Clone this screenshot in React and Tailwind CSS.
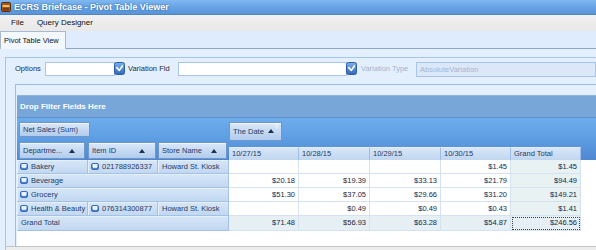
import React from "react";

function AppIcon() {
  return (
    <svg width="10" height="10" viewBox="0 0 10 10">
      <rect x="0.5" y="0.5" width="9" height="9" rx="1" fill="#a4561f" stroke="#5b2c0c" />
      <rect x="1.5" y="3" width="7" height="2" fill="#f0c060" />
      <rect x="2" y="6" width="6" height="2.5" fill="#7a3a12" />
    </svg>
  );
}

function DropBtn() {
  return (
    <svg width="11" height="13" viewBox="0 0 11 13" className="shrink-0 -ml-px">
      <defs>
        <linearGradient id="db" x1="0" y1="0" x2="0" y2="1">
          <stop offset="0" stopColor="#7fb0ec" />
          <stop offset="1" stopColor="#2f66b8" />
        </linearGradient>
      </defs>
      <rect x="0.5" y="0.5" width="10" height="12" rx="2" fill="url(#db)" stroke="#2b5ca6" />
      <path d="M2.8 5.6 L5.3 8.4 L8.4 4" fill="none" stroke="#ffffff" strokeWidth="1.6" strokeLinecap="round" strokeLinejoin="round" />
    </svg>
  );
}

function Tri() {
  return (
    <svg width="6" height="4" viewBox="0 0 6 4" className="shrink-0">
      <path d="M0 4 L3 0 L6 4Z" fill="#1d2f4f" />
    </svg>
  );
}

function Funnel() {
  return (
    <svg width="5" height="5" viewBox="0 0 5 5" className="shrink-0">
      <path d="M0.5 0.5 H4.5 L3 2.3 V4.5 L2 4 V2.3Z" fill="none" stroke="#eef4fc" strokeWidth="0.8" />
    </svg>
  );
}

function Collapse() {
  return (
    <svg width="8" height="7" viewBox="0 0 8 7" className="shrink-0">
      <rect x="0.5" y="0.5" width="7" height="6" rx="1.5" fill="#4d84cc" stroke="#3a6db5" />
      <rect x="1.5" y="1" width="5" height="3" rx="0.5" fill="#e9f2fc" />
      <path d="M2 4.5 H6" stroke="#ffffff" strokeWidth="0.8" />
    </svg>
  );
}

const fieldBtn =
  "box-border flex items-center border border-[#7097cb] bg-[linear-gradient(180deg,#dbe8f8,#c3d8f2_55%,#b2ccec)] text-[#1f3a66] shadow-[inset_0_1px_0_#eef5fd]";

const cols = [70, 71, 71, 70, 70];
const dates = ["10/27/15", "10/28/15", "10/29/15", "10/30/15", "Grand Total"];

const rows = [
  { h: ["Bakery", "021788926337", "Howard St. Kiosk"], v: ["", "", "", "$1.45", "$1.45"] },
  { h: ["Beverage"], v: ["$20.18", "$19.39", "$33.13", "$21.79", "$94.49"] },
  { h: ["Grocery"], v: ["$51.30", "$37.05", "$29.66", "$31.20", "$149.21"] },
  { h: ["Health & Beauty", "076314300877", "Howard St. Kiosk"], v: ["", "$0.49", "$0.49", "$0.43", "$1.41"] },
];

const rowHead =
  "box-border h-full flex items-center border-r border-b border-[#a4c1e6] bg-[linear-gradient(180deg,#d6e6f8,#c2d8f1)] text-[#1f3a66] shadow-[inset_1px_1px_0_#e6f0fb] whitespace-nowrap overflow-hidden";

function DataCells({ v, total }) {
  return v.map((x, i) => {
    const gt = i === 4;
    let bg = "bg-white";
    if (gt) bg = "bg-[#e8f2f2]";
    if (total) bg = "bg-[#e5eff4]";
    const focus = total && gt;
    return (
      <div
        key={i}
        style={{ width: cols[i] }}
        className={`box-border h-full border-r border-b border-[#d4e2f2] ${bg} flex items-center justify-end pr-[3px] text-[#1c1f3d] ${
          focus ? "outline outline-1 outline-dotted outline-[#444] -outline-offset-2" : ""
        }`}
      >
        {x}
      </div>
    );
  });
}

export default function App() {
  return (
    <div className="w-[596px] h-[250px] overflow-hidden flex flex-col bg-[#e3effd] text-[7.5px] leading-none font-['Liberation_Sans',Arial,sans-serif] text-[#1a1a1a]">
      {/* Title bar */}
      <div className="h-[15px] shrink-0 flex items-center gap-[3px] pl-[1px] bg-[linear-gradient(180deg,#80b8f0,#64a0e3_60%,#5a93d8)] border-b border-[#4f86c9]">
        <AppIcon />
        <span className="text-white font-bold text-[9px] [text-shadow:0_0_2px_#1f4f8f]">
          ECRS Briefcase - Pivot Table Viewer
        </span>
      </div>
      {/* Menu bar */}
      <div className="h-[16px] shrink-0 flex items-center gap-[13px] pl-[11px] bg-[linear-gradient(180deg,#f1f1f1,#e8e8e8)] text-[#111] text-[8px]">
        <span>File</span>
        <span>Query Designer</span>
      </div>
      {/* Tab strip */}
      <div className="h-[18px] shrink-0 box-border flex bg-[#dfecfd] border-b border-[#8ea6c6]">
        <div className="relative z-10 w-[66px] h-[18px] -mb-px box-border bg-[#f3f8fe] border-x border-t border-[#a8b8cd] flex items-center pl-[3px] text-[#111]">
          Pivot Table View
        </div>
      </div>
      {/* Panel */}
      <div className="flex-1 flex flex-col pt-[8px] pl-[5px] min-h-0">
        <div className="flex-1 flex flex-col border-t border-l border-[#a6c6ee] min-h-0">
          {/* Options row */}
          <div className="h-[26px] shrink-0 flex items-start pt-[4px] pl-[9px]">
            <div className="h-[14px] flex items-center w-[30px] text-[#1d2a40]">Options</div>
            <div className="h-[14px] w-[70px] box-border bg-white border border-[#a9c4e6]" />
            <DropBtn />
            <div className="h-[14px] flex items-center ml-[3px] w-[50px] text-[#1d2a40]">Variation Fld</div>
            <div className="h-[14px] w-[169px] box-border bg-white border border-[#a9c4e6]" />
            <DropBtn />
            <div className="h-[14px] flex items-center ml-[4px] w-[55px] text-[#9fb5d2]">Variation Type</div>
            <div className="h-[15px] flex-1 box-border bg-[#dce8f8] border border-[#a9c3e6] flex items-center pl-[3px] text-[#a2b7d4]">
              AbsoluteVariation
            </div>
          </div>
          {/* Pivot control */}
          <div className="flex-1 ml-[9px] flex flex-col border-t border-l border-[#9dbde5] pt-[10px] pl-[1px] min-h-0">
            <div className="flex-1 flex flex-col bg-white min-h-0">
              {/* Filter band */}
              <div className="h-[23px] shrink-0 box-border flex items-center pl-[3px] bg-[#79a6d9] border-b border-[#5f8fcb] border-t border-t-[#8db4e2]">
                <span className="text-white font-bold text-[8px]">Drop Filter Fields Here</span>
              </div>
              {/* Area band */}
              <div className="h-[42px] shrink-0 flex flex-col bg-[linear-gradient(180deg,#6dadec,#5f9fe3_45%,#5590d9_80%,#4e87d0)]">
                <div className="h-[24px] flex items-start">
                  <div className={`${fieldBtn} ml-[2px] mt-[4px] w-[71px] h-[15px] pl-[3px]`}>Net Sales (Sum)</div>
                  <div className={`${fieldBtn} ml-[139px] mt-[4px] w-[53px] h-[19px] pl-[3px] gap-[4px] items-start pt-[5px] relative`}>
                    <span>The Date</span>
                    <span className="mt-[1px]"><Tri /></span>
                    <span className="absolute right-[2px] top-[1px]"><Funnel /></span>
                  </div>
                </div>
                <div className="h-[18px] flex items-start">
                  <div className={`${fieldBtn} ml-[2px] w-[66px] h-[17px] pl-[3px] justify-between pr-[9px]`}>
                    <span>Departme...</span>
                    <Tri />
                  </div>
                  <div className={`${fieldBtn} ml-[3px] w-[68px] h-[17px] pl-[3px] justify-between pr-[10px]`}>
                    <span>Item ID</span>
                    <Tri />
                  </div>
                  <div className={`${fieldBtn} ml-[2px] w-[69px] h-[17px] pl-[3px] justify-between pr-[9px]`}>
                    <span>Store Name</span>
                    <Tri />
                  </div>
                  <div className="ml-[2px] self-end flex h-[13px]">
                    {dates.map((d, i) => (
                      <div
                        key={d}
                        style={{ width: cols[i] }}
                        className="box-border h-full flex items-center pl-[3px] border-r border-[#a0bee4] border-t border-t-[#e4eefb] bg-[linear-gradient(180deg,#d8e7f8,#c0d6f1)] text-[#1f3a66]"
                      >
                        {d}
                      </div>
                    ))}
                  </div>
                </div>
              </div>
              {/* Data rows */}
              {rows.map((r, ri) => (
                <div key={ri} className="h-[14px] shrink-0 flex">
                  {r.h.length === 3 ? (
                    <>
                      <div className={`${rowHead} w-[71px] pl-[3px] gap-[3px]`}>
                        <Collapse />
                        <span>{r.h[0]}</span>
                      </div>
                      <div className={`${rowHead} w-[70px] pl-[3px] gap-[3px]`}>
                        <Collapse />
                        <span>{r.h[1]}</span>
                      </div>
                      <div className={`${rowHead} w-[71px] pl-[4px]`}>
                        <span>{r.h[2]}</span>
                      </div>
                    </>
                  ) : (
                    <div className={`${rowHead} w-[212px] pl-[3px] gap-[3px]`}>
                      <Collapse />
                      <span>{r.h[0]}</span>
                    </div>
                  )}
                  <DataCells v={r.v} />
                </div>
              ))}
              <div className="h-[15px] shrink-0 flex">
                <div className={`${rowHead} w-[212px] pl-[4px]`}>
                  <span>Grand Total</span>
                </div>
                <DataCells v={["$71.48", "$56.93", "$63.28", "$54.87", "$246.56"]} total />
              </div>
              <div className="flex-1" />
            </div>
          </div>
          {/* Scrollbar strip */}
          <div className="h-[4px] shrink-0 box-border border-t border-[#c4c4c4] bg-[#ececec]" />
        </div>
      </div>
    </div>
  );
}
